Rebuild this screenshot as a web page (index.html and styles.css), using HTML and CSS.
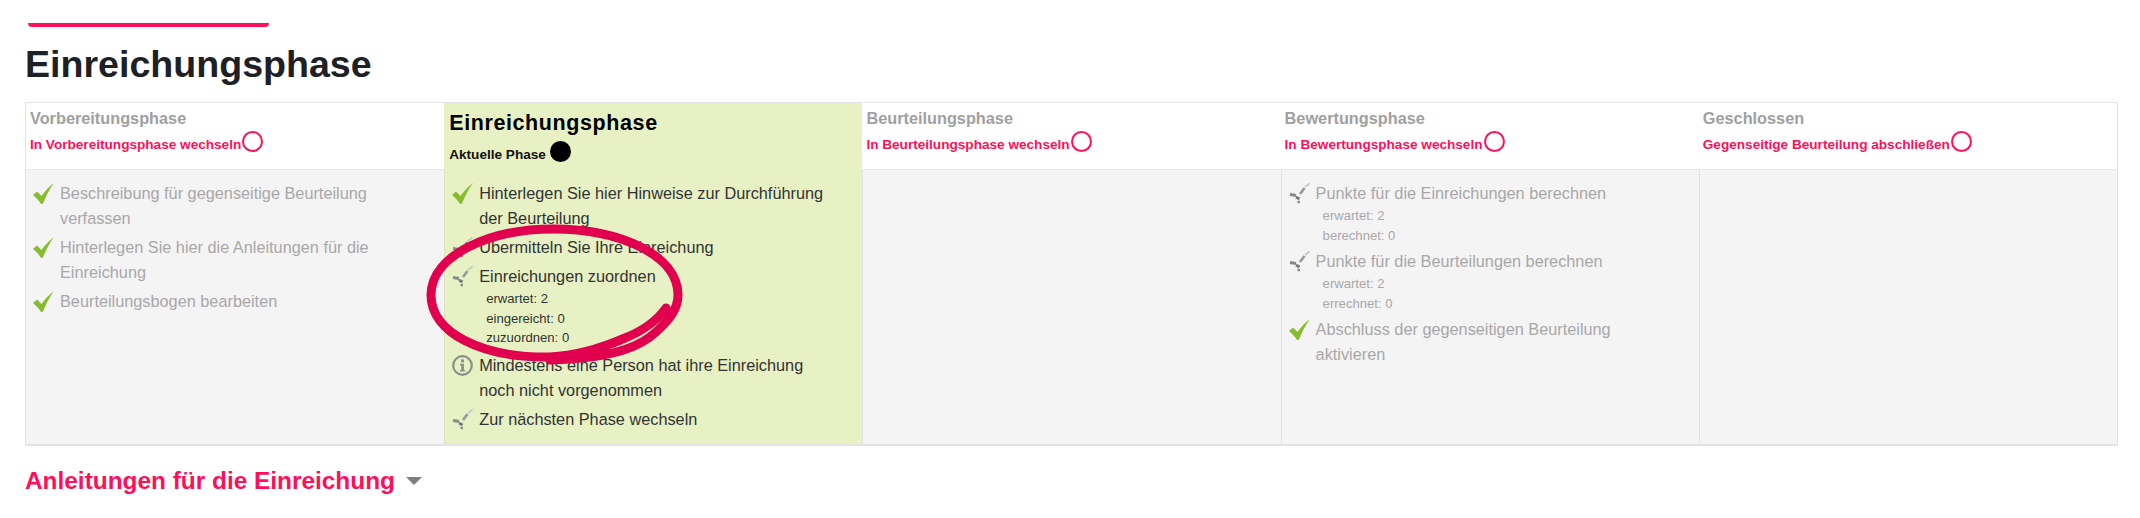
FILE: index.html
```html
<!DOCTYPE html>
<html>
<head>
<meta charset="utf-8">
<title>Einreichungsphase</title>
<link rel="stylesheet" href="styles.css">
</head>
<body>
  <svg width="0" height="0" class="defs">
    <symbol id="done" viewBox="0 0 21 21">
      <path d="M0 12 L4 8.5 L8.5 13 C11.5 9 15.5 4 21 0 C16.5 6 13 13 10 20.5 L8 21 C6 17.5 3 14.5 0 12 Z" fill="#85bd2e"/>
    </symbol>
    <symbol id="todo" viewBox="0 0 21 21">
      <path d="M20.5 0.5 L16 4" stroke="#bbb" stroke-width="1.5" fill="none"/>
      <path d="M15.5 5 L11 11" stroke="#999" stroke-width="2.6" fill="none"/>
      <path d="M1 11.5 L7 12.5" stroke="#8a8a8a" stroke-width="2.8" fill="none"/>
      <path d="M7 14 L10.5 16" stroke="#777" stroke-width="2.8" fill="none"/>
      <path d="M8.5 19 L11 19" stroke="#8a8a8a" stroke-width="2.4" fill="none"/>
    </symbol>
    <symbol id="info" viewBox="0 0 21 21">
      <circle cx="10.5" cy="10.5" r="9.3" fill="none" stroke="#8c8f8c" stroke-width="2.2"/>
      <rect x="9" y="4.4" width="3" height="3" fill="#8c8f8c"/>
      <path d="M8 8.8 H12 V15 H13.2 V16.6 H8 V15 H9.2 V10.4 H8 Z" fill="#8c8f8c"/>
    </symbol>
  </svg>

  <div class="topbar"></div>
  <h2 class="page-title">Einreichungsphase</h2>

  <div class="phases">
    <div class="phase">
      <div class="phase-head">
        <div class="phase-name">Vorbereitungsphase</div>
        <div class="phase-switch">In Vorbereitungsphase wechseln<span class="ring"></span></div>
      </div>
      <div class="phase-body">
        <div class="task"><svg class="ico"><use href="#done"/></svg><div class="task-text">Beschreibung für gegenseitige Beurteilung verfassen</div></div>
        <div class="task"><svg class="ico"><use href="#done"/></svg><div class="task-text">Hinterlegen Sie hier die Anleitungen für die Einreichung</div></div>
        <div class="task"><svg class="ico"><use href="#done"/></svg><div class="task-text">Beurteilungsbogen bearbeiten</div></div>
      </div>
    </div>

    <div class="phase current">
      <div class="phase-head">
        <div class="phase-name">Einreichungsphase</div>
        <div class="phase-switch">Aktuelle Phase<span class="ring"></span></div>
      </div>
      <div class="phase-body">
        <div class="task"><svg class="ico"><use href="#done"/></svg><div class="task-text">Hinterlegen Sie hier Hinweise zur Durchführung der Beurteilung</div></div>
        <div class="task"><svg class="ico"><use href="#todo"/></svg><div class="task-text">Übermitteln Sie Ihre Einreichung</div></div>
        <div class="task"><svg class="ico"><use href="#todo"/></svg><div class="task-text">Einreichungen zuordnen
          <ul class="details"><li>erwartet: 2</li><li>eingereicht: 0</li><li>zuzuordnen: 0</li></ul>
        </div></div>
        <div class="task"><svg class="ico"><use href="#info"/></svg><div class="task-text">Mindestens eine Person hat ihre Einreichung noch nicht vorgenommen</div></div>
        <div class="task"><svg class="ico"><use href="#todo"/></svg><div class="task-text">Zur nächsten Phase wechseln</div></div>
      </div>
    </div>

    <div class="phase">
      <div class="phase-head">
        <div class="phase-name">Beurteilungsphase</div>
        <div class="phase-switch">In Beurteilungsphase wechseln<span class="ring"></span></div>
      </div>
      <div class="phase-body"></div>
    </div>

    <div class="phase">
      <div class="phase-head">
        <div class="phase-name">Bewertungsphase</div>
        <div class="phase-switch">In Bewertungsphase wechseln<span class="ring"></span></div>
      </div>
      <div class="phase-body">
        <div class="task"><svg class="ico"><use href="#todo"/></svg><div class="task-text">Punkte für die Einreichungen berechnen
          <ul class="details"><li>erwartet: 2</li><li>berechnet: 0</li></ul>
        </div></div>
        <div class="task"><svg class="ico"><use href="#todo"/></svg><div class="task-text">Punkte für die Beurteilungen berechnen
          <ul class="details"><li>erwartet: 2</li><li>errechnet: 0</li></ul>
        </div></div>
        <div class="task"><svg class="ico"><use href="#done"/></svg><div class="task-text">Abschluss der gegenseitigen Beurteilung aktivieren</div></div>
      </div>
    </div>

    <div class="phase">
      <div class="phase-head">
        <div class="phase-name">Geschlossen</div>
        <div class="phase-switch">Gegenseitige Beurteilung abschließen<span class="ring"></span></div>
      </div>
      <div class="phase-body"></div>
    </div>
  </div>

  <div class="instructions">Anleitungen für die Einreichung<span class="caret"></span></div>

  <!-- hand drawn marker on top of the screenshot -->
  <svg class="marker" viewBox="0 0 2140 518">
    <path d="M666 308 C656 322 640 332 625 338 C602 348 578 356 550 357 C480 358 431 332 431 295 C431 255 490 229 553 229 C620 229 678 255 678 295 C678 310 668 321 656 332 C643 344 620 358 550 360" fill="none" stroke="#e0004d" stroke-width="9" stroke-linecap="round"/>
  </svg>
</body>
</html>
```

FILE: styles.css
```css
html, body {
  margin: 0;
  height: 518px;
  overflow: hidden;
  background: #fff;
}
body {
  position: relative;
  padding: 23px 22px 0 25px;
  box-sizing: border-box;
  font-family: "Liberation Sans", Arial, sans-serif;
}
.defs {
  display: block;
  height: 0;
}
.topbar {
  width: 241px;
  height: 4px;
  margin-left: 3px;
  background: #ff0f5a;
  border-radius: 0 0 6px 6px;
}
.page-title {
  margin: 16px 0 15px;
  font-size: 37.6px;
  line-height: 43px;
  font-weight: bold;
  color: #1d2125;
}
.phases {
  display: grid;
  grid-template-columns: repeat(5, 1fr);
  height: 344px;
  margin-top: 16px;
  border: 1px solid #e3e3e3;
  border-bottom-width: 2px;
  box-sizing: border-box;
}
.phase {
  display: flex;
  flex-direction: column;
  min-width: 0;
}
.phase-head {
  height: 67px;
  padding: 3px 4px 0;
  box-sizing: border-box;
  border-bottom: 1px solid #e8e8e8;
}
.phase-name {
  font-size: 16.3px;
  line-height: 24px;
  font-weight: bold;
  color: #a0a0a0;
}
.phase-switch {
  display: flex;
  align-items: flex-start;
  margin-top: 3px;
  font-size: 13.6px;
  line-height: 24px;
  font-weight: bold;
  color: #ff0f5a;
}
.ring {
  width: 21px;
  height: 21px;
  margin: -2px 0 0 1px;
  border: 2px solid #ff0f5a;
  border-radius: 50%;
  box-sizing: border-box;
  background: #fff;
}
.phase-body {
  flex: 1;
  padding: 11px 7px 0 7px;
  background: #f4f4f4;
  border-left: 1px solid #e3e3e3;
  color: #a8a8a8;
}
.phase:first-child .phase-body {
  border-left: 0;
}
.task {
  display: flex;
  gap: 6px;
  margin-bottom: 4px;
  font-size: 16.3px;
  line-height: 25px;
}
.ico {
  flex: none;
  width: 21px;
  height: 21px;
  margin-top: 2px;
}
.task-text {
  flex: none;
  width: 350px;
}
.details {
  margin: 0;
  padding: 0 0 0 7px;
  list-style: none;
  font-size: 13.1px;
  line-height: 19.5px;
}
.current {
  background: #e7f1c3;
}
.current .details {
  padding-bottom: 1.5px;
}
.current .phase-head {
  padding: 5px 5px 0;
  border-bottom: 0;
}
.current .phase-name {
  font-size: 21.5px;
  letter-spacing: 0.6px;
  color: #000;
  line-height: 30px;
}
.current .phase-switch {
  margin-top: 5px;
  font-size: 13.6px;
  color: #111;
}
.current .ring {
  background: #000;
  border-color: #000;
  margin: -2px 0 0 4px;
}
.current .phase-body {
  background: #e7f1c3;
  color: #333;
  border-left: 1px solid #dde2c6;
}
.instructions {
  display: flex;
  align-items: center;
  margin-top: 21px;
  font-size: 24.4px;
  line-height: 28px;
  font-weight: bold;
  color: #ff0f5a;
}
.caret {
  width: 0;
  height: 0;
  margin-left: 11px;
  border-style: solid;
  border-width: 8px 8px 0;
  border-color: #7f7f7f transparent transparent;
}
.marker {
  position: absolute;
  left: 0;
  top: 0;
  width: 2140px;
  height: 518px;
  pointer-events: none;
}
```
